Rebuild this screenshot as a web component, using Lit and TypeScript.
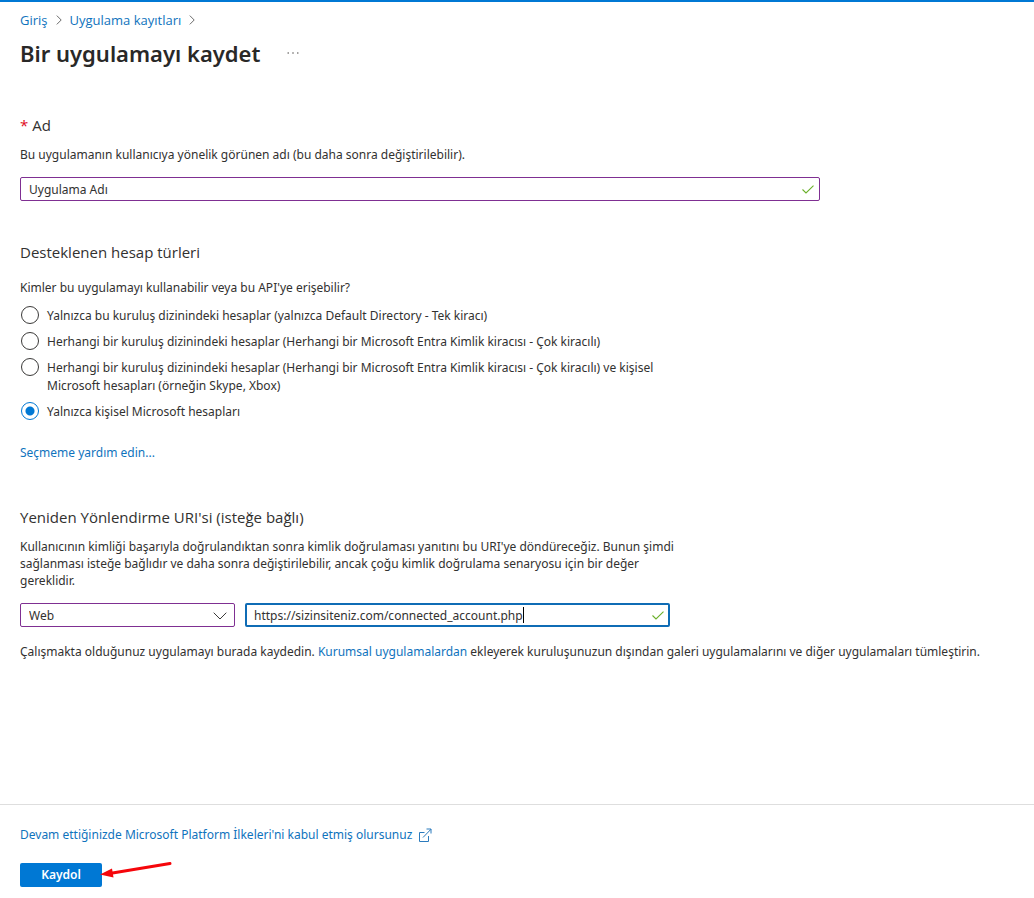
import { LitElement, html, css, svg } from "lit";
import { customElement, state } from "lit/decorators.js";

const accountTypes = [
  "Yalnızca bu kuruluş dizinindeki hesaplar (yalnızca Default Directory - Tek kiracı)",
  "Herhangi bir kuruluş dizinindeki hesaplar (Herhangi bir Microsoft Entra Kimlik kiracısı - Çok kiracılı)",
  "Herhangi bir kuruluş dizinindeki hesaplar (Herhangi bir Microsoft Entra Kimlik kiracısı - Çok kiracılı) ve kişisel Microsoft hesapları (örneğin Skype, Xbox)",
  "Yalnızca kişisel Microsoft hesapları",
];

const chevronRight = html`<svg class="crumb-sep" viewBox="0 0 6 10" width="6" height="10" aria-hidden="true">
  ${svg`<path d="M0.8 0.6 L5.2 5 L0.8 9.4" fill="none" stroke="#6b6b6b" stroke-width="1" />`}
</svg>`;

const checkMark = html`<svg class="check" viewBox="0 0 12 9" width="12" height="9" aria-hidden="true">
  ${svg`<path d="M0.5 4.5 L4 8 L11.5 0.6" fill="none" stroke="#6bb02a" stroke-width="1.1" />`}
</svg>`;

@customElement("app-root")
export class AppRoot extends LitElement {
  @state() private selected = 3;

  static styles = css`
    :host {
      display: flex;
      flex-direction: column;
      box-sizing: border-box;
      min-height: 100vh;
      border-top: 2px solid #0078d4;
      background: #fff;
      color: #323130;
      font: 12px/18px "Noto Sans", "Open Sans", sans-serif;
    }
    a {
      color: #0f73bd;
      text-decoration: none;
    }
    main {
      flex: 1;
      padding: 9px 20px 24px;
    }
    .crumbs {
      display: flex;
      align-items: center;
      gap: 8px;
      font-family: "Open Sans", sans-serif;
      font-size: 13px;
    }
    .title-row {
      display: flex;
      align-items: center;
      gap: 27px;
      margin-top: 8px;
    }
    h1 {
      margin: 0;
      font-size: 22px;
      line-height: 32px;
      font-weight: 600;
      color: #292827;
    }
    .more {
      display: flex;
      border: 0;
      padding: 0;
      background: none;
    }
    section {
      margin-top: 40px;
    }
    .name-section {
      margin-top: 45px;
    }
    .redirect-section {
      margin-top: 44px;
    }
    h2 {
      margin: 0;
      font-family: "Open Sans", sans-serif;
      font-size: 15px;
      line-height: 22px;
      font-weight: 400;
    }
    .required {
      color: #e00b1c;
    }
    p {
      margin: 0;
    }
    .name-hint {
      margin-top: 10px;
    }
    .field {
      position: relative;
      display: flex;
      height: 24px;
    }
    .name-field {
      max-width: 800px;
      margin-top: 13px;
    }
    input.text,
    select {
      box-sizing: border-box;
      width: 100%;
      height: 24px;
      margin: 0;
      padding: 0 28px 0 8px;
      border: 1px solid #7f2f92;
      border-radius: 2px;
      background: #fff;
      color: #323130;
      font: inherit;
      outline: none;
      appearance: none;
    }
    select {
      padding-top: 2px;
    }
    input.active {
      padding: 0 27px 0 7px;
      border: 2px solid #0f6cb5;
    }
    .check {
      position: absolute;
      right: 6px;
      top: 8px;
    }
    .chevron {
      position: absolute;
      right: 8px;
      top: 9px;
      pointer-events: none;
    }
    fieldset {
      display: flex;
      flex-direction: column;
      gap: 8px;
      max-width: 660px;
      margin: 16px 0 0;
      padding: 0;
      border: 0;
      min-width: 0;
    }
    legend {
      margin-bottom: 10px;
      padding: 0;
    }
    .option {
      display: flex;
      align-items: flex-start;
      gap: 8px;
    }
    .option input {
      flex: none;
      appearance: none;
      box-sizing: border-box;
      width: 18px;
      height: 18px;
      margin: -1px 0 0 1px;
      border: 1px solid #3b3a39;
      border-radius: 50%;
      background: #fff;
    }
    .option input:checked {
      border-color: #0078d4;
      background: radial-gradient(circle, #0078d4 4px, #fff 5px);
    }
    .help {
      display: inline-block;
      margin-top: 23px;
    }
    .redirect-hint {
      max-width: 670px;
      margin-top: 10px;
      line-height: 17px;
    }
    .uri-row {
      display: grid;
      grid-template-columns: 215px 1fr;
      gap: 10px;
      max-width: 650px;
      margin-top: 14px;
    }
    .caret {
      position: absolute;
      left: 278px;
      top: 4px;
      width: 1px;
      height: 16px;
      background: #000;
    }
    .gallery {
      margin-top: 16px;
    }
    footer {
      padding: 21px 20px 11px;
      border-top: 1px solid #dedede;
    }
    .policy {
      display: flex;
      align-items: center;
      gap: 6px;
    }
    .action {
      position: relative;
      display: inline-flex;
      margin-top: 19px;
    }
    .submit {
      height: 24px;
      min-width: 82px;
      padding: 0 20px;
      border: 0;
      border-radius: 2px;
      background: #0078d4;
      color: #fff;
      font: inherit;
      font-weight: 600;
    }
    .arrow {
      position: absolute;
      left: 79px;
      top: -3px;
      pointer-events: none;
    }
  `;

  render() {
    return html`
      <main>
        <nav class="crumbs" aria-label="İçerik haritası">
          <a href="#">Giriş</a>${chevronRight}<a href="#">Uygulama kayıtları</a>${chevronRight}
        </nav>
        <div class="title-row">
          <h1>Bir uygulamayı kaydet</h1>
          <button class="more" type="button" aria-label="Diğer">
            <svg viewBox="0 0 12 4" width="12" height="4">
              <circle cx="1.2" cy="2" r="0.8" fill="#605e5c" />
              <circle cx="6" cy="2" r="0.8" fill="#605e5c" />
              <circle cx="10.8" cy="2" r="0.8" fill="#605e5c" />
            </svg>
          </button>
        </div>

        <section class="name-section">
          <h2><label for="name"><span class="required">*</span> Ad</label></h2>
          <p class="name-hint">Bu uygulamanın kullanıcıya yönelik görünen adı (bu daha sonra değiştirilebilir).</p>
          <div class="field name-field">
            <input id="name" class="text" type="text" value="Uygulama Adı" />
            ${checkMark}
          </div>
        </section>

        <section>
          <h2>Desteklenen hesap türleri</h2>
          <fieldset>
            <legend>Kimler bu uygulamayı kullanabilir veya bu API'ye erişebilir?</legend>
            ${accountTypes.map(
              (text, i) => html`<label class="option">
                <input type="radio" name="account" .checked=${this.selected === i} @change=${() => (this.selected = i)} />
                <span>${text}</span>
              </label>`
            )}
          </fieldset>
          <a class="help" href="#">Seçmeme yardım edin...</a>
        </section>

        <section class="redirect-section">
          <h2>Yeniden Yönlendirme URI'si (isteğe bağlı)</h2>
          <p class="redirect-hint">
            Kullanıcının kimliği başarıyla doğrulandıktan sonra kimlik doğrulaması yanıtını bu URI'ye döndüreceğiz. Bunun
            şimdi sağlanması isteğe bağlıdır ve daha sonra değiştirilebilir, ancak çoğu kimlik doğrulama senaryosu için
            bir değer gereklidir.
          </p>
          <div class="uri-row">
            <div class="field">
              <select aria-label="Platform">
                <option>Web</option>
              </select>
              <svg class="chevron" viewBox="0 0 14 8" width="14" height="8" aria-hidden="true">
                <path d="M0.7 0.7 L7 7 L13.3 0.7" fill="none" stroke="#3b3a39" stroke-width="1" />
              </svg>
            </div>
            <div class="field">
              <input class="text active" type="text" aria-label="URI" value="https://sizinsiteniz.com/connected_account.php" />
              <span class="caret"></span>
              ${checkMark}
            </div>
          </div>
          <p class="gallery">
            Çalışmakta olduğunuz uygulamayı burada kaydedin. <a href="#">Kurumsal uygulamalardan</a> ekleyerek
            kuruluşunuzun dışından galeri uygulamalarını ve diğer uygulamaları tümleştirin.
          </p>
        </section>
      </main>

      <footer>
        <a class="policy" href="#">
          Devam ettiğinizde Microsoft Platform İlkeleri'ni kabul etmiş olursunuz
          <svg viewBox="0 0 14 14" width="14" height="14" aria-hidden="true">
            <path d="M6.5 4.5 H1.5 V13.5 H10.5 V8 M5 9.5 L13 1.2 M8.5 1 H13 V5.5" fill="none" stroke="#2b7bbd" stroke-width="1" />
          </svg>
        </a>
        <div class="action">
          <button class="submit" type="button">Kaydol</button>
          <svg class="arrow" viewBox="0 0 74 20" width="74" height="20" aria-hidden="true">
            <path d="M12 13.2 L71 3.5" stroke="#f5060b" stroke-width="3" stroke-linecap="round" />
            <path d="M1 14.5 L13 8.5 L14.5 17.5 Z" fill="#f5060b" />
          </svg>
        </div>
      </footer>
    `;
  }
}
